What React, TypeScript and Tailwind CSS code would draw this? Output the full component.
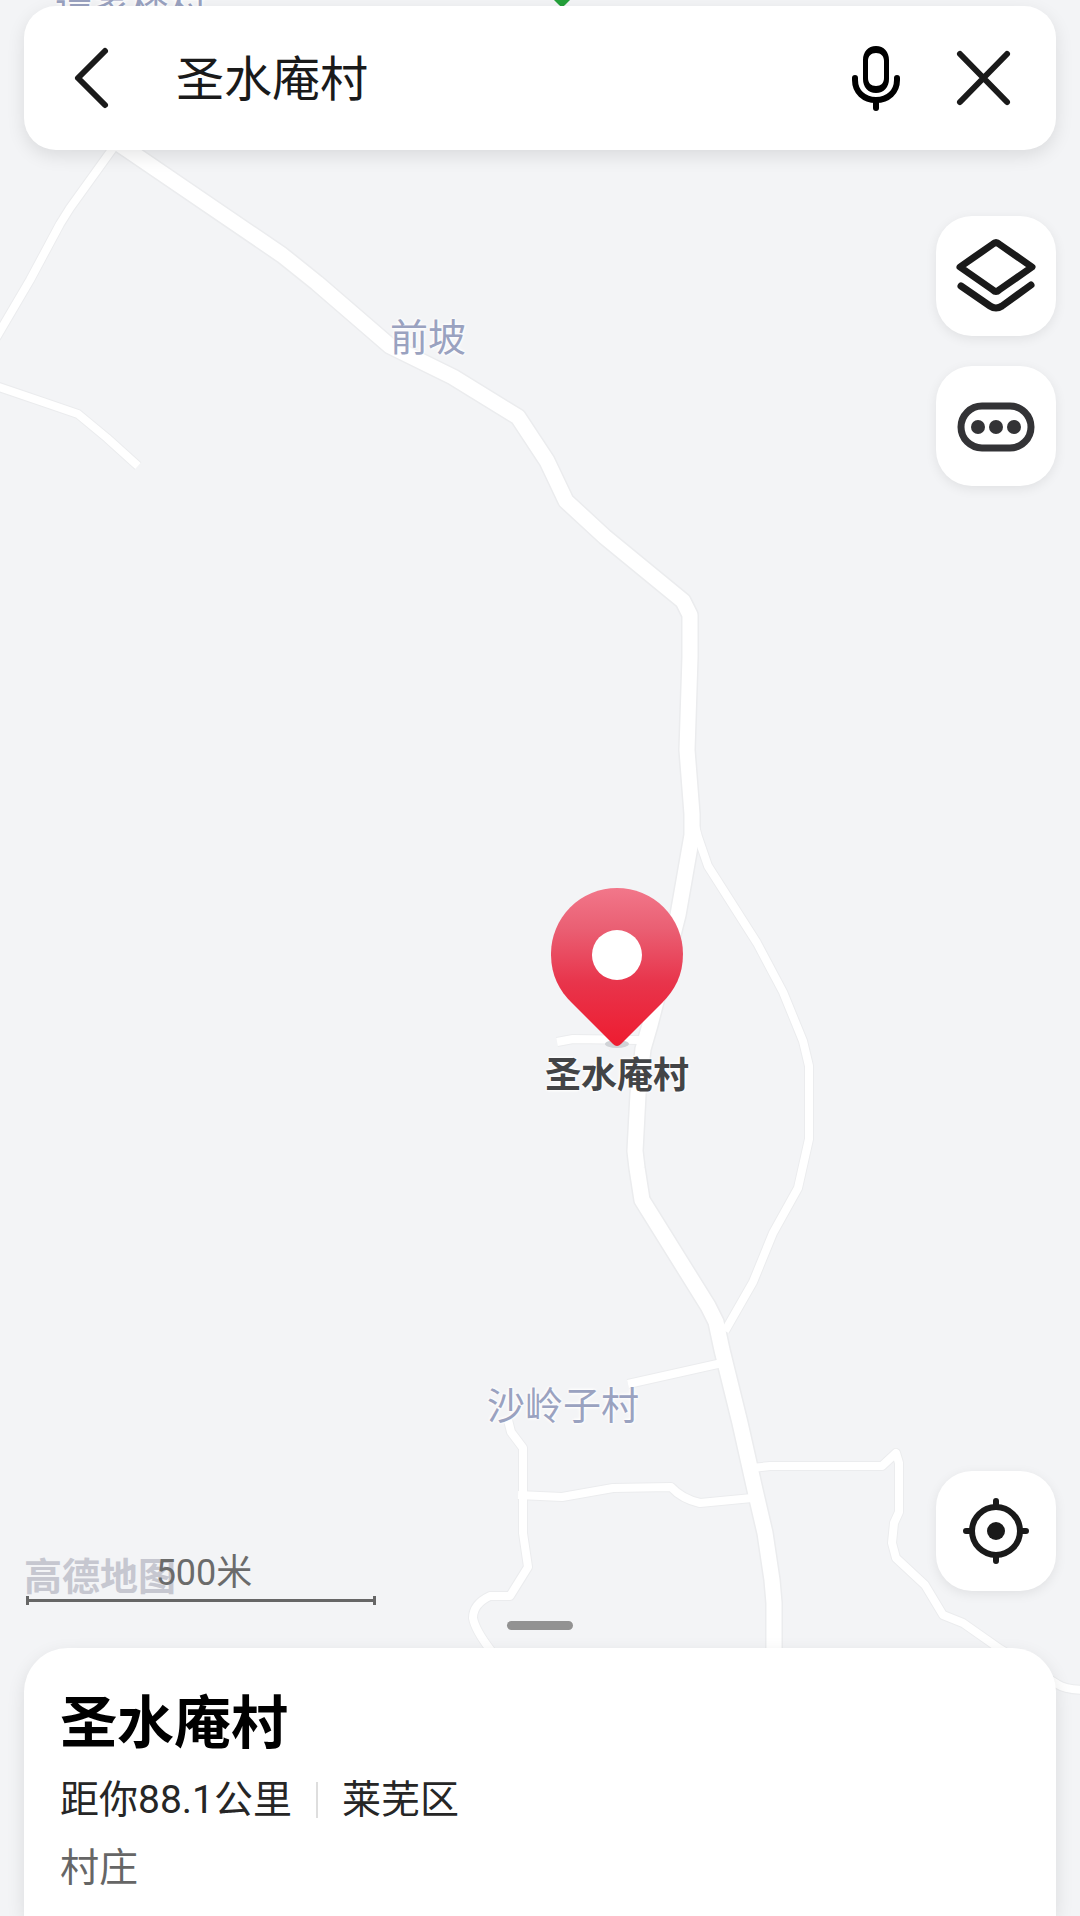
import React, { useState } from 'react';

const MAP_WIDTH = 1080;
const MAP_HEIGHT = 1916;

const mainRoad =
  'M104 134 L128 150 L282 255 L317 283 L390 346 L453 377 L518 417 L547 461 L566 501 L605 537 L683 601 L690 615 L690 657 L687 750 L692 814 L692 835 L678 915 L650 1025 L643 1049 L638 1094 L635 1151 L637 1168 L642 1200 L708 1306 L716 1322 L722 1350 L740 1423 L755 1490 L765 1533 L772 1580 L774 1603 L774 1660';

const sideRoads = [
  'M116 144 L70 208 L60 224 L30 280 L-4 338',
  'M-4 386 L43 402 L78 414 L107 438 L138 466',
  'M695 826 L698 837 L708 866 L757 943 L783 992 L803 1041 L809 1066 L809 1139 L798 1188 L773 1233 L753 1282 L725 1331',
  'M557 1042 L573 1039 L640 1040',
  'M628 1384 L722 1363',
  'M508 1420 L511 1432 L523 1448 L523 1533 L528 1567 L510 1596 L490 1596 Q473 1604 473 1618 Q475 1630 492 1652',
  'M518 1495 L562 1497 L613 1488 L671 1487 Q682 1499 700 1503 L752 1498',
  'M752 1468 L770 1466 L882 1466 L896 1453 L899 1463 L899 1512 L894 1523 L892 1543 L896 1558 L925 1585 L943 1615 L963 1623 L1000 1649 L1057 1684 Q1066 1690 1086 1690',
];

const places = [
  { name: '谭家楼村', x: 131, y: 7 },
  { name: '前坡', x: 428, y: 338 },
  { name: '沙岭子村', x: 563, y: 1406 },
];

// Keeps a pin on its spot when the map stretches with the window
const pinStyle = (x: number, y: number) => ({
  left: `${(x / MAP_WIDTH) * 100}%`,
  top: `${(y / MAP_HEIGHT) * 100}%`,
});

const Pin = () => (
  <svg width="132" height="164" viewBox="0 0 132 164">
    <defs>
      <linearGradient id="pin" x1="0" y1="0" x2="0" y2="1">
        <stop offset="0" stopColor="#f2778a" />
        <stop offset="0.25" stopColor="#ea6074" />
        <stop offset="0.6" stopColor="#e8344b" />
        <stop offset="1" stopColor="#ee1c30" />
      </linearGradient>
    </defs>
    <ellipse cx="66" cy="156" rx="12" ry="4" fill="#d0d2d6" />
    <path
      d="M66 0 A66 66 0 0 1 132 66 C132 87 124 102 111 115 L70 156 Q66 160 62 156 L21 115 C8 102 0 87 0 66 A66 66 0 0 1 66 0Z"
      fill="url(#pin)"
    />
    <circle cx="66" cy="67" r="25" fill="#fff" />
  </svg>
);

const MapCanvas = () => (
  <div className="absolute inset-0 overflow-hidden bg-[#f3f4f6]">
    <svg
      className="absolute inset-0 h-full w-full"
      viewBox={`0 0 ${MAP_WIDTH} ${MAP_HEIGHT}`}
      preserveAspectRatio="none"
      fill="none"
      strokeLinejoin="round"
    >
      <g stroke="#ebecee">
        {sideRoads.map((d) => (
          <path key={d} d={d} strokeWidth="10" />
        ))}
        <path d={mainRoad} strokeWidth="18" />
      </g>
      <g stroke="#fff">
        {sideRoads.map((d) => (
          <path key={d} d={d} strokeWidth="8" />
        ))}
        <path d={mainRoad} strokeWidth="15" />
      </g>
      <path d="M552 -2 L559 5 Q562 8 565 5 L572 -2Z" fill="#24a03a" />
    </svg>

    {places.map((place) => (
      <span
        key={place.name}
        className="absolute -translate-x-1/2 -translate-y-1/2 whitespace-nowrap text-[38px] leading-none text-[#9aa2c0] [text-shadow:0_0_3px_#fff,0_0_3px_#fff,0_0_4px_#fff]"
        style={pinStyle(place.x, place.y)}
      >
        {place.name}
      </span>
    ))}

    {/* Selected place */}
    <div
      className="absolute flex -translate-x-1/2 flex-col items-center"
      style={pinStyle(617, 888)}
    >
      <Pin />
      <span className="mt-1 whitespace-nowrap text-[36px] font-bold leading-10 text-[#434446] [text-shadow:0_0_3px_#fff,0_0_3px_#fff,0_0_4px_#fff]">
        圣水庵村
      </span>
    </div>
  </div>
);

type MapButtonProps = {
  label: string;
  children: React.ReactNode;
};

const MapButton = ({ label, children }: MapButtonProps) => (
  <button
    type="button"
    aria-label={label}
    className="size-[120px] rounded-[36px] bg-white shadow-[0_3px_12px_rgba(0,0,0,0.08)]"
  >
    <svg
      width="120"
      height="120"
      viewBox="0 0 120 120"
      fill="none"
      strokeLinecap="round"
      strokeLinejoin="round"
    >
      {children}
    </svg>
  </button>
);

const SearchBar = () => {
  const [query, setQuery] = useState('圣水庵村');

  return (
    <header className="relative mx-6 mt-1.5 flex h-36 items-center rounded-[32px] bg-white px-10 shadow-[0_6px_18px_rgba(0,0,0,0.1)]">
      <button type="button" aria-label="返回" className="shrink-0">
        <svg width="48" height="72" viewBox="0 0 48 72" fill="none">
          <path
            d="M41 9 L14 36 L41 63"
            stroke="#1a1a1a"
            strokeWidth="6"
            strokeLinecap="round"
            strokeLinejoin="round"
          />
        </svg>
      </button>
      <input
        type="text"
        aria-label="搜索地点"
        value={query}
        onChange={(e) => setQuery(e.target.value)}
        className="ml-16 h-20 min-w-0 flex-1 bg-transparent pb-1.5 text-[48px] text-[#1a1a1a] outline-none"
      />
      <button type="button" aria-label="语音搜索" className="shrink-0">
        <svg width="60" height="72" viewBox="0 0 60 72" fill="none" stroke="#000">
          <path
            fillRule="evenodd"
            stroke="none"
            fill="#000"
            d="M30 4 C38 4 43 10 43 18 V37 C43 45 38 51 30 51 C22 51 17 45 17 37 V18 C17 10 22 4 30 4Z M30 11 C25 11 22 14 22 19 V36 C22 41 25 44 30 44 C35 44 38 41 38 36 V19 C38 14 35 11 30 11Z"
          />
          <path d="M9 36 V38 C9 50 18 58 30 58 C42 58 51 50 51 38 V36" strokeWidth="6" strokeLinecap="round" />
          <path d="M30 58 V66" strokeWidth="6" strokeLinecap="round" />
        </svg>
      </button>
      <button type="button" aria-label="清除" className="ml-10 shrink-0" onClick={() => setQuery('')}>
        <svg width="70" height="72" viewBox="0 0 70 72" fill="none">
          <path
            d="M14 12 L61 60 M61 12 L14 60"
            stroke="#1a1a1a"
            strokeWidth="6"
            strokeLinecap="round"
          />
        </svg>
      </button>
    </header>
  );
};

const ScaleBar = () => (
  <div className="relative w-[352px]">
    <span className="absolute bottom-2 left-0 text-[38px] font-bold leading-10 text-[#c6c7d0]">
      高德地图
    </span>
    <p className="relative pl-2 text-center text-[36px] leading-10 text-[#6b6b6b]">500米</p>
    <div className="ml-[2px] mt-[3px] flex h-[9px] items-center border-x-[3px] border-[#666]">
      <div className="h-[3px] w-full bg-[#666]" />
    </div>
  </div>
);

const PlaceCard = () => (
  <section className="relative mx-6">
    <div className="mx-auto mb-[18px] h-[9px] w-[66px] rounded-full bg-[#929292]" />
    <div className="rounded-t-[44px] bg-white px-9 pt-11 pb-[18px] shadow-[0_6px_18px_rgba(0,0,0,0.1)]">
      <h1 className="text-[57px] font-bold leading-[64px] text-black">圣水庵村</h1>
      <div className="mt-[14px] flex items-center text-[39px] leading-[60px] text-[#262626]">
        <span>距你88.1公里</span>
        <span className="mx-6 h-9 w-[2px] bg-[#dedede]" />
        <span>莱芜区</span>
      </div>
      <p className="mt-2 text-[39px] leading-[60px] text-[#666]">村庄</p>
    </div>
  </section>
);

const App = () => {
  return (
    <div className="relative flex min-h-screen flex-col overflow-hidden font-[Roboto,'Noto_Sans_CJK_SC',sans-serif]">
      <MapCanvas />
      <SearchBar />

      <main className="relative flex flex-1 flex-col justify-between px-6 pt-[66px] pb-4">
        <div className="flex flex-col gap-[30px] self-end">
          <MapButton label="图层">
            <g stroke="#1a1a1a" strokeWidth="7">
              <path d="M57 28 Q60 25 63 28 L96 51 L63 74 Q60 77 57 74 L24 51Z" />
              <path d="M25 70 L54 90 Q60 94 66 90 L95 69" />
            </g>
          </MapButton>
          <MapButton label="更多">
            <rect x="25" y="40" width="70" height="42" rx="21" stroke="#333336" strokeWidth="7" />
            <g fill="#333336">
              <circle cx="42" cy="61" r="7" />
              <circle cx="60" cy="61" r="7" />
              <circle cx="78" cy="61" r="7" />
            </g>
          </MapButton>
        </div>

        <div className="flex items-end justify-between">
          <ScaleBar />
          <div className="mb-[14px] flex">
            <MapButton label="定位">
              <g stroke="#1a1a1a" strokeWidth="6">
                <circle cx="60" cy="60" r="24" />
                <path d="M60 30 V36 M60 84 V90 M30 60 H36 M84 60 H90" />
              </g>
              <circle cx="60" cy="60" r="9" fill="#1a1a1a" />
            </MapButton>
          </div>
        </div>
      </main>

      <PlaceCard />
    </div>
  );
};

export default App;
